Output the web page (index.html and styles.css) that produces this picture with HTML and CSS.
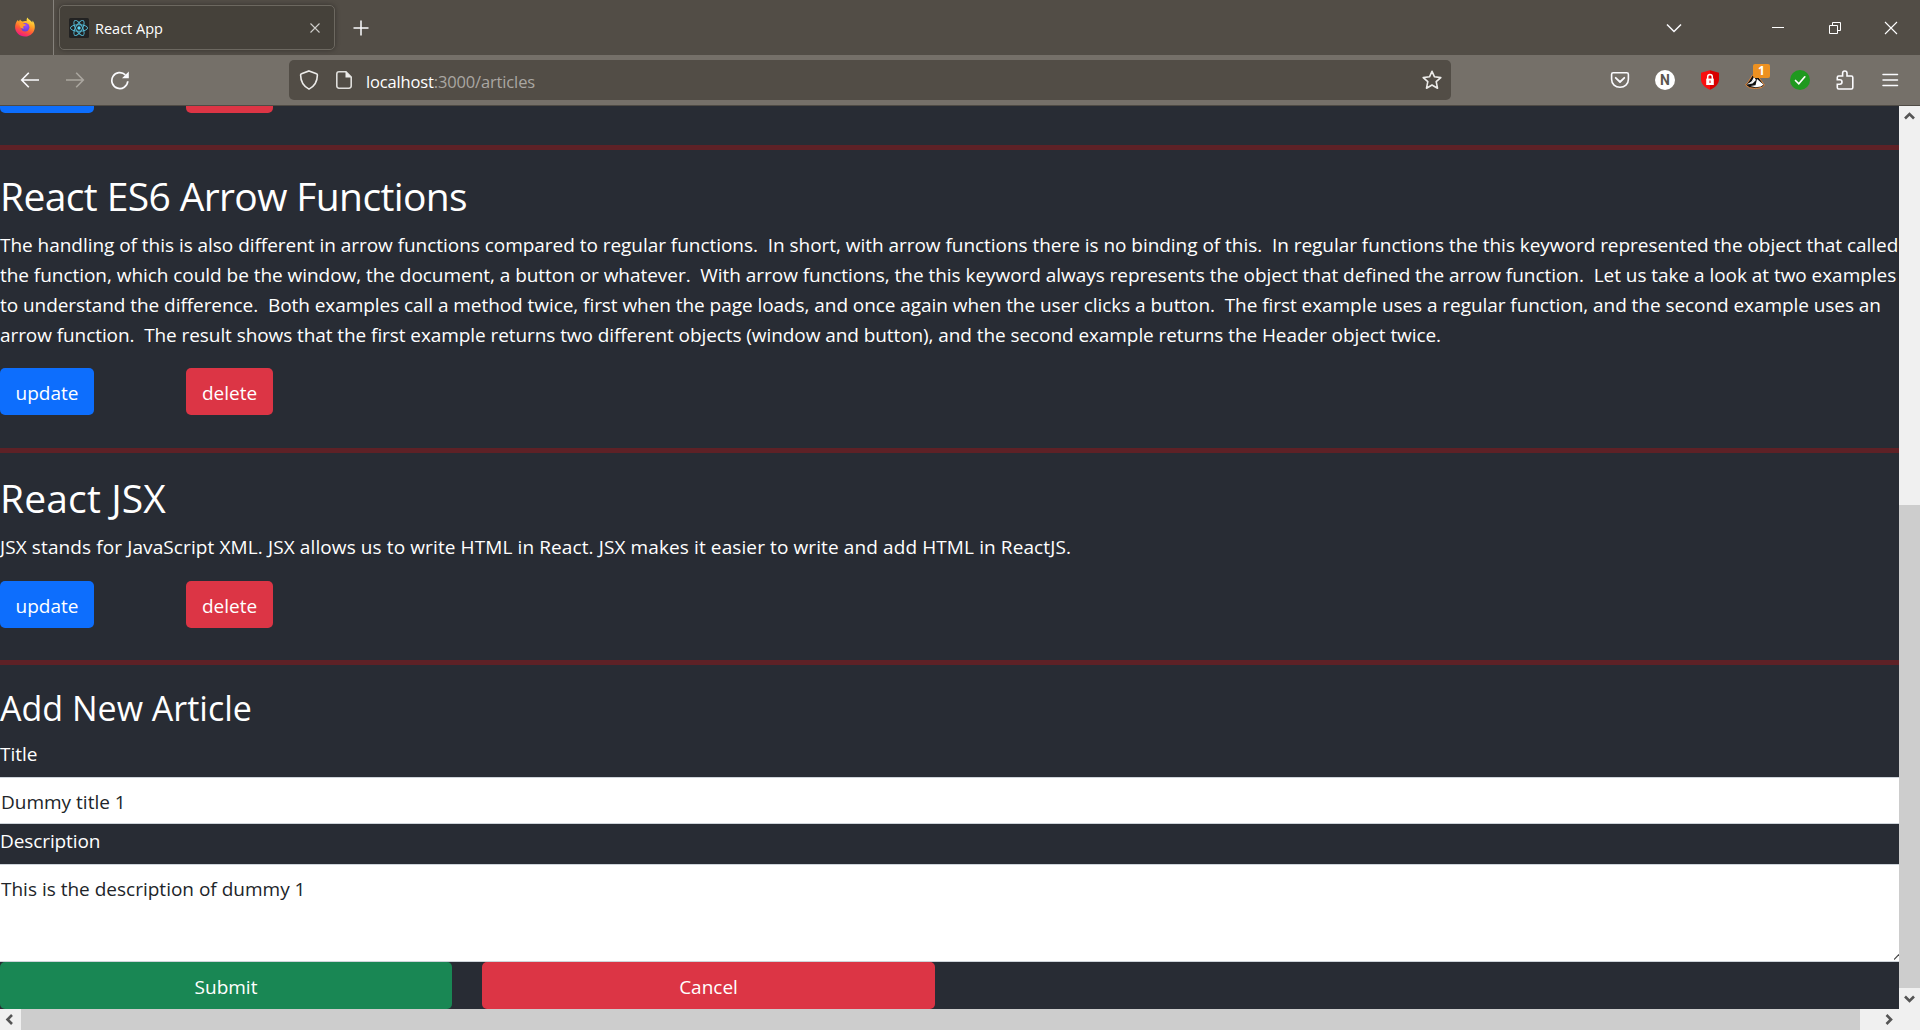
FILE: index.html
```html
<!DOCTYPE html>
<html lang="en">
<head>
<meta charset="utf-8">
<title>React App</title>
<link rel="stylesheet" href="styles.css">
</head>
<body>
<div class="tabbar">
  <div class="firefox">
    <svg width="20" height="20" viewBox="0 0 20 20">
      <defs>
        <linearGradient id="fx" x1=".75" y1="0" x2=".3" y2="1"><stop offset="0" stop-color="#fff44f"/><stop offset=".35" stop-color="#ffa928"/><stop offset=".65" stop-color="#ff5a35"/><stop offset="1" stop-color="#f0128a"/></linearGradient>
        <radialGradient id="globe" cx=".6" cy=".3" r=".8"><stop offset="0" stop-color="#a04bff"/><stop offset="1" stop-color="#5b3fd0"/></radialGradient>
      </defs>
      <path fill="url(#fx)" d="M12.4.4c-.8 1.300-1 2.600-.6 3.800-1.500-.4-3-.2-4.200.4C6.600 4.300 5.600 3.700 5.100 2.600 4.600 3 4.300 3.700 4.200 4.500 3.600 4.200 3.100 3.700 2.800 3 1 5 .1 7.500.1 10c0 5.300 4.400 9.500 9.900 9.500s9.800-4.200 9.800-9.600c0-2.500-.9-5-2.400-6.300.1.700.1 1.300-.1 2C16.200 3.100 13.400 2.700 12.400.4z"/>
      <circle cx="10.200" cy="10.200" r="4.200" fill="url(#globe)"/>
      <path fill="#ff9a2a" d="M4 6.800c2-1.300 4-1 5.200.2l1.700.5c-.2 1.200-1.600 1.500-2.400 1.800-.8.600-.3 1.500.6 1.900-2 .8-3.700-.3-4.100-2z"/>
    </svg>
  </div>
  <div class="tab">
    <svg width="20" height="20" viewBox="0 0 20 20">
      <rect width="20" height="20" rx="1.500" fill="#222"/>
      <g fill="none" stroke="#53b8d4" stroke-width=".95"><ellipse cx="10" cy="10" rx="8.600" ry="3.300"/><ellipse cx="10" cy="10" rx="8.600" ry="3.300" transform="rotate(60 10 10)"/><ellipse cx="10" cy="10" rx="8.600" ry="3.300" transform="rotate(120 10 10)"/></g>
      <circle cx="10" cy="10" r="1.700" fill="#61dafb"/>
    </svg>
    <span class="tab-title">React App</span>
    <svg class="tab-close" width="10" height="10" viewBox="0 0 10 10"><path d="M.5.5l9 9M9.500.5l-9 9" stroke="#d0cfcc" stroke-width="1.100"/></svg>
  </div>
  <svg class="plus" width="16" height="16" viewBox="0 0 16 16"><path d="M8 .5v15M.5 8h15" stroke="#fbfbfe" stroke-width="1.500"/></svg>
  <div class="window-controls">
    <svg width="16" height="10" viewBox="0 0 16 10"><path d="M1 1.500l7 7 7-7" fill="none" stroke="#fbfbfe" stroke-width="1.500"/></svg>
    <svg width="12" height="12" viewBox="0 0 12 12"><path d="M0 5.500h12" stroke="#fff"/></svg>
    <svg width="12" height="12" viewBox="0 0 12 12"><path d="M.5 3.500h8v8h-8zM3.500 3.500v-3h8v8h-3" fill="none" stroke="#fff"/></svg>
    <svg width="14" height="14" viewBox="0 0 14 14"><path d="M1 1l12 12M13 1L1 13" stroke="#fff" stroke-width="1.100"/></svg>
  </div>
</div>
<div class="navbar">
  <div class="nav-buttons">
    <svg width="20" height="20" viewBox="0 0 20 20"><path d="M19 10H2M8.800 2.800L1.700 10l7.100 7.200" fill="none" stroke="#fbfbfe" stroke-width="1.600"/></svg>
    <svg width="20" height="20" viewBox="0 0 20 20"><path d="M1 10h17M11.200 2.800l7.100 7.200-7.100 7.200" fill="none" stroke="#aaa69f" stroke-width="1.600"/></svg>
    <svg width="20" height="20" viewBox="0 0 20 20"><path d="M17.800 11.200A8 8 0 1 1 15.400 4.800" fill="none" stroke="#fbfbfe" stroke-width="1.700"/><path d="M18.800 1.500v6.700H12z" fill="#fbfbfe"/></svg>
  </div>
  <div class="urlbar">
    <svg width="20" height="20" viewBox="0 0 20 20"><path d="M10 .9l7.500 2.900c.6.200.9.700.9 1.300-.1 6-2 11-8.400 14C3.600 16.100 1.700 11.100 1.600 5.100c0-.6.300-1.100.9-1.300z" fill="none" stroke="#ecebe9" stroke-width="1.600"/></svg>
    <svg class="page" width="16" height="18" viewBox="0 0 16 18"><path d="M3 .8h7l5.200 5.200v9a2.200 2.200 0 0 1-2.200 2.200H3A2.200 2.200 0 0 1 .8 15V3A2.200 2.200 0 0 1 3 .8z" fill="none" stroke="#dfdedb" stroke-width="1.600"/><path d="M9.500.3l6.200 6.200h-6.200z" fill="#ecebe9"/></svg>
    <span class="url">localhost<span class="path">:3000/articles</span></span>
    <svg class="star" width="20" height="20" viewBox="0 0 20 20"><path d="M10 1.300l2.500 5.500 6.300.8-4.600 4.100 1.300 6.500-5.500-3.200-5.500 3.200 1.300-6.500L1.200 7.600l6.300-.8z" fill="none" stroke="#ecebe9" stroke-width="1.600" stroke-linejoin="round"/></svg>
  </div>
  <div class="extensions">
    <svg width="20" height="20" viewBox="0 0 20 20"><path d="M3.200 2.800h13.600c.9 0 1.600.7 1.600 1.600v4.800c0 5-3.800 8.100-8.400 8.100S1.600 14.200 1.600 9.200V4.400c0-.9.700-1.600 1.600-1.600z" fill="none" stroke="#fbfbfe" stroke-width="1.600"/><path d="M5.700 7.800L10 12l4.300-4.200" fill="none" stroke="#fbfbfe" stroke-width="1.800" stroke-linecap="round" stroke-linejoin="round"/></svg>
    <span class="disc">N</span>
    <svg width="20" height="20" viewBox="0 0 20 20"><path d="M10 .2l9 2.600v6.400c0 5-4.300 8.600-9 10.600z" fill="#d80000"/><path d="M10 .2L1 2.800v6.400c0 5 4.300 8.600 9 10.600z" fill="#f81010"/><path d="M6.200 8.600h7.600v6.400H6.200z" fill="#fff"/><path d="M7.700 9V6.700a2.300 2.300 0 0 1 4.600 0V9" fill="none" stroke="#fff" stroke-width="1.500"/><path d="M9.500 10.400h1v2.600h-1z" fill="#d00"/></svg>
    <span class="badger">
      <svg width="20" height="20" viewBox="0 0 20 20"><path d="M.6 15L3.500 11.500l4-6.500 3-2 8.900 12-2.500 2.500-6.500 1-6-.8z" fill="#111" stroke="#e88b3c"/><path d="M1.600 14.500l5-3L9 7l2 3-3.500 3.500zM12 9l6.500 5.500-2.500 2-5.500.8-5-1.300 5-.8z" fill="#fff"/><path d="M4 14l5-4" stroke="#ddd"/></svg>
      <span class="badge">1</span>
    </span>
    <svg width="20" height="20" viewBox="0 0 20 20"><circle cx="10" cy="10" r="10" fill="#1f991f"/><path d="M5.500 10.500l3.300 3.300 6-7" fill="none" stroke="#fff" stroke-width="1.700" stroke-linecap="round"/></svg>
    <svg width="20" height="20" viewBox="0 0 20 20"><path d="M7.600 6V3.200a2.200 2.200 0 0 1 4.400 0V6h4.400c.8 0 1.400.6 1.400 1.400v10.200c0 .8-.6 1.400-1.400 1.400H3.700c-.8 0-1.400-.6-1.400-1.400v-3.400h2.500a2.200 2.200 0 0 0 0-4.400H2.300V7.400C2.300 6.600 2.900 6 3.700 6z" fill="none" stroke="#fbfbfe" stroke-width="1.600"/></svg>
    <svg width="20" height="20" viewBox="0 0 20 20"><path d="M3 4.400h14.500M3 9.900h14.500M3 15.400h14.500" stroke="#fbfbfe" stroke-width="1.500" stroke-linecap="round"/></svg>
  </div>
</div>
<div class="viewport">
  <main class="content">
    <div class="actions clipped"><span class="btn primary"></span><span class="btn danger"></span></div>
    <hr>
    <article class="long">
      <h2 class="tight">React ES6 Arrow Functions</h2>
      <p><span class="l1">The handling of this is also different in arrow functions compared to regular functions.&nbsp; In short, with arrow functions there is no binding of this.&nbsp; In regular functions the this keyword represented the object that called</span><br>
      <span class="l2">the function, which could be the window, the document, a button or whatever.&nbsp; With arrow functions, the this keyword always represents the object that defined the arrow function.&nbsp; Let us take a look at two examples</span><br>
      <span class="l3">to understand the difference.&nbsp; Both examples call a method twice, first when the page loads, and once again when the user clicks a button.&nbsp; The first example uses a regular function, and the second example uses an</span><br>
      <span class="l4">arrow function.&nbsp; The result shows that the first example returns two different objects (window and button), and the second example returns the Header object twice.</span></p>
      <div class="actions"><button class="btn primary">update</button><button class="btn danger">delete</button></div>
    </article>
    <hr>
    <article class="short">
      <h2>React JSX</h2>
      <p><span class="l5">JSX stands for JavaScript XML. JSX allows us to write HTML in React. JSX makes it easier to write and add HTML in ReactJS.</span></p>
      <div class="actions"><button class="btn primary">update</button><button class="btn danger">delete</button></div>
    </article>
    <hr>
    <section class="form">
      <h3>Add New Article</h3>
      <div class="label">Title</div>
      <div class="field">Dummy title 1</div>
      <div class="label second">Description</div>
      <div class="field area">This is the description of dummy 1
        <svg class="grip" width="5" height="6" viewBox="0 0 5 6"><path d="M0 5.500L5 .5" stroke="#444" stroke-width="1.200"/></svg>
      </div>
      <div class="submit-row"><button class="btn success">Submit</button><button class="btn danger">Cancel</button></div>
    </section>
  </main>
  <div class="vscroll">
    <svg width="21" height="21" viewBox="0 0 21 21"><path d="M6 12.500l4.500-4.500 4.500 4.500" fill="none" stroke="#555" stroke-width="2.600"/></svg>
    <div class="vthumb"></div>
    <svg width="21" height="21" viewBox="0 0 21 21"><path d="M6 8.500l4.500 4.500L15 8.500" fill="none" stroke="#555" stroke-width="2.600"/></svg>
  </div>
</div>
<div class="hscroll">
  <svg width="21" height="21" viewBox="0 0 21 21"><path d="M12 6l-4.500 4.500L12 15" fill="none" stroke="#555" stroke-width="2.600"/></svg>
  <div class="hthumb"></div>
  <svg class="right" width="21" height="21" viewBox="0 0 21 21"><path d="M8.500 6l4.500 4.500L8.500 15" fill="none" stroke="#555" stroke-width="2.600"/></svg>
</div>
</body>
</html>
```
FILE: styles.css
```css
* { box-sizing: border-box; }
body { margin: 0; width: 1920px; height: 1030px; overflow: hidden; background: #282c34; color: #fff; font: 19px/30px "Open Sans", "Noto Sans", sans-serif; }
svg { display: block; flex: none; }
.tabbar { display: flex; align-items: center; height: 55px; background: #524d46; }
.firefox { display: flex; align-items: center; width: 54px; height: 55px; padding: 0 0 2px 15px; border-right: 1px solid #86827c; }
.tab { display: flex; align-items: center; width: 276px; height: 45px; margin-left: 5px; padding: 0 14px 0 9px; background: #45413a; border: 1px solid #6c6860; border-radius: 5px; box-shadow: 0 0 5px rgba(0, 0, 0, .35); }
.tab-title { flex: 1; padding: 2px 0 0 6px; font-size: 14.5px; }
.plus { margin-left: 18px; }
.window-controls { display: flex; align-items: center; margin-left: auto; padding-right: 22px; }
.window-controls svg:nth-child(2) { margin-left: 90px; }
.window-controls svg:nth-child(3) { margin-left: 45px; }
.window-controls svg:nth-child(4) { margin-left: 43px; }
.navbar { display: flex; align-items: center; height: 51px; background: #757069; border-bottom: 1px solid #4f4b45; }
.nav-buttons { display: flex; gap: 25px; width: 289px; padding-left: 20px; }
.urlbar { display: flex; align-items: center; width: 1162px; height: 40px; padding: 0 9px 0 10px; background: #524d46; border-radius: 5px; }
.page { margin-left: 17px; }
.url { margin-left: 14px; padding-top: 3px; font-size: 16.5px; letter-spacing: -.15px; }
.path { color: #aaa7a2; }
.star { margin-left: auto; }
.extensions { display: flex; align-items: center; gap: 25px; margin-left: 159px; }
.disc { width: 20px; height: 20px; border-radius: 50%; background: #fff; color: #5b564f; font: bold 14px/20px Roboto, sans-serif; text-align: center; }
.badger { position: relative; }
.badge { position: absolute; left: 8px; top: -6px; width: 17px; height: 14px; border-radius: 2px; background: #ed9121; font: bold 12px/14px "Open Sans", sans-serif; text-align: center; }
.viewport { display: flex; height: 903px; }
.content { width: 1899px; overflow: hidden; }
hr { height: 5px; margin: 0; border: 0; background: #5e2126; }
h2, h3, p { margin: 0; font-weight: 400; white-space: nowrap; }
.actions { display: flex; }
.clipped { height: 39px; padding-bottom: 32px; align-items: flex-end; overflow: hidden; }
.btn { display: block; flex: none; height: 47px; padding: 2px 0 0; border: 0; border-radius: 5px; color: #fff; font: inherit; text-align: center; }
.primary { width: 94px; background: #0d6efd; }
.danger { width: 87px; margin-left: 92px; background: #dc3545; }
article { padding-top: 21px; }
.long { height: 298px; }
.short { height: 207px; padding-top: 20px; }
.short p { padding-bottom: 19px; }
h2 { height: 59px; font-size: 39px; line-height: 50px; letter-spacing: .14px; }
h2.tight { letter-spacing: -.62px; }
p { padding-bottom: 18px; }
.l1 { letter-spacing: -.038px; }
.l2 { letter-spacing: -.044px; }
.l3 { letter-spacing: -.058px; }
.l4 { letter-spacing: -.078px; }
.l5 { letter-spacing: .107px; }
.form { padding-top: 21px; }
h3 { height: 53px; font-size: 34px; line-height: 44px; }
.label { height: 38px; }
.label.second { height: 40px; padding-top: 2px; letter-spacing: -.1px; }
.field { height: 47px; padding: 9px 1px; background: #fff; color: #212529; border: solid #ced4da; border-width: 1px 0; }
.area { position: relative; height: 98px; }
.grip { position: absolute; right: 0; bottom: 1px; }
.submit-row { display: flex; gap: 30px; }
.success { width: 452px; background: #198754; }
.submit-row .danger { width: 453px; margin: 0; }
.vscroll { display: flex; flex-direction: column; width: 21px; background: #f0f0f0; }
.vthumb { height: 483px; margin-top: auto; background: #cdcdcd; }
.hscroll { display: flex; height: 21px; padding-right: 21px; background: #f0f0f0; }
.hthumb { width: 1839px; background: #cdcdcd; }
.right { margin-left: auto; }
```
